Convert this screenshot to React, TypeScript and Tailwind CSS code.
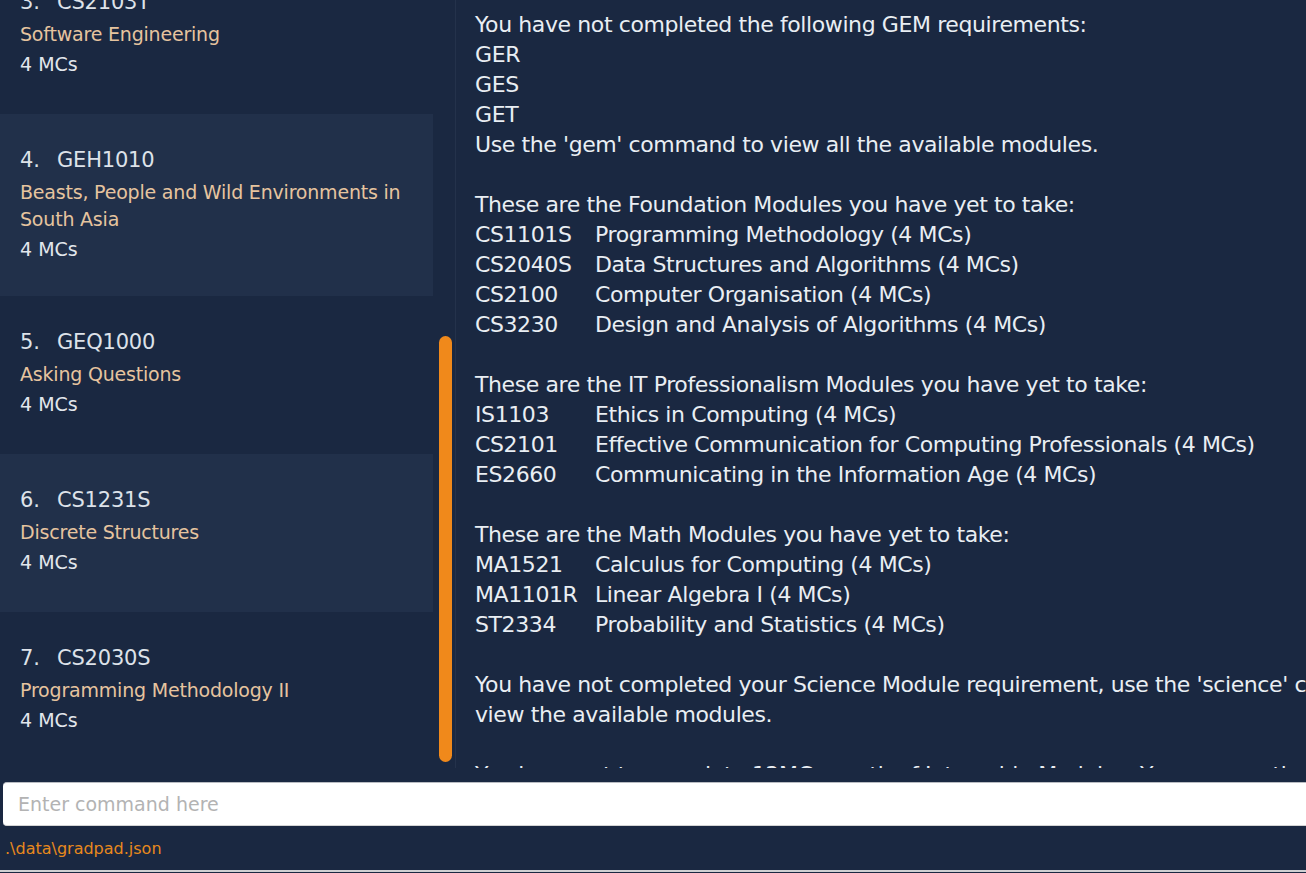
import React from 'react';

type Mod = { idx: number; code: string; title: string[]; mcs: number };

const modules: Mod[] = [
  { idx: 3, code: 'CS2103T', title: ['Software Engineering'], mcs: 4 },
  { idx: 4, code: 'GEH1010', title: ['Beasts, People and Wild Environments in', 'South Asia'], mcs: 4 },
  { idx: 5, code: 'GEQ1000', title: ['Asking Questions'], mcs: 4 },
  { idx: 6, code: 'CS1231S', title: ['Discrete Structures'], mcs: 4 },
  { idx: 7, code: 'CS2030S', title: ['Programming Methodology II'], mcs: 4 },
];

// each line of the result box: plain text, blank, or a module row
type Line = { text?: string; code?: string; name?: string };

const output: Line[] = [
  { text: 'You have not completed the following GEM requirements:' },
  { text: 'GER' },
  { text: 'GES' },
  { text: 'GET' },
  { text: "Use the 'gem' command to view all the available modules." },
  {},
  { text: 'These are the Foundation Modules you have yet to take:' },
  { code: 'CS1101S', name: 'Programming Methodology (4 MCs)' },
  { code: 'CS2040S', name: 'Data Structures and Algorithms (4 MCs)' },
  { code: 'CS2100', name: 'Computer Organisation (4 MCs)' },
  { code: 'CS3230', name: 'Design and Analysis of Algorithms (4 MCs)' },
  {},
  { text: 'These are the IT Professionalism Modules you have yet to take:' },
  { code: 'IS1103', name: 'Ethics in Computing (4 MCs)' },
  { code: 'CS2101', name: 'Effective Communication for Computing Professionals (4 MCs)' },
  { code: 'ES2660', name: 'Communicating in the Information Age (4 MCs)' },
  {},
  { text: 'These are the Math Modules you have yet to take:' },
  { code: 'MA1521', name: 'Calculus for Computing (4 MCs)' },
  { code: 'MA1101R', name: 'Linear Algebra I (4 MCs)' },
  { code: 'ST2334', name: 'Probability and Statistics (4 MCs)' },
  {},
  { text: "You have not completed your Science Module requirement, use the 'science' command to" },
  { text: 'view the available modules.' },
  {},
  { text: 'You have yet to complete 12MCs worth of Internship Modules. You can use the' },
];

const ModuleCard = ({ mod }: { mod: Mod }) => {
  const bg = mod.idx % 2 === 0 ? 'bg-[#21304a]' : 'bg-[#1a2841]';
  const pb = mod.title.length > 1 ? 'pb-[33px]' : 'pb-[36px]';
  return (
    <div className={`${bg} ${pb} pl-5 pt-[31px]`}>
      <div className="flex text-[21px] leading-[30px] tracking-[-0.2px] text-[#dde2e9] whitespace-nowrap">
        <span className="w-[37px] shrink-0">{mod.idx}.</span>
        <span>{mod.code}</span>
      </div>
      <div className="mt-[4px] text-[19px] leading-[27px] tracking-[-0.2px] text-[#e6c49f]">
        {mod.title.map((t) => (
          <div key={t} className="whitespace-nowrap">{t}</div>
        ))}
      </div>
      <div className="mt-[3px] text-[19px] leading-[27px] text-[#e2e6ec]">{mod.mcs} MCs</div>
    </div>
  );
};

export default function App() {
  return (
    <div
      className="w-[1306px] h-[873px] bg-[#1a2841] flex flex-col overflow-hidden"
      style={{ fontFamily: '"DejaVu Sans", sans-serif' }}
    >
      <div className="h-[770px] flex shrink-0">
        {/* module list */}
        <div className="w-[433px] shrink-0 overflow-hidden">
          <div className="-mt-[44px] flex flex-col">
            {modules.map((m) => (
              <ModuleCard key={m.idx} mod={m} />
            ))}
          </div>
        </div>
        {/* scroll bar */}
        <div className="w-[22px] shrink-0 pl-[6px] pt-[336px]">
          <div className="w-[13px] h-[426px] rounded-full bg-[#f0891b]" />
        </div>
        <div className="w-px h-[768px] bg-[#24324b] shrink-0" />
        {/* result display */}
        <div className="flex-1 h-[768px] overflow-hidden pl-[19px] pt-[10px] text-[22px] leading-[30px] tracking-[-0.4px] text-[#e9eef3]">
          {output.map((l, i) =>
            l.code ? (
              <div key={i} className="flex whitespace-nowrap">
                <div className="w-[120px] shrink-0">{l.code}</div>
                <div>{l.name}</div>
              </div>
            ) : (
              <div key={i} className="whitespace-nowrap h-[30px]">{l.text ?? ''}</div>
            )
          )}
        </div>
      </div>
      {/* command box */}
      <div className="mt-[12px] ml-[3px] -mr-[12px] h-[44px] shrink-0 bg-white rounded-[4px] border-t border-[#b9bcc2] border-b border-b-[#d4d4d4] flex items-center pl-[15px]">
        <span className="text-[19px] text-[#b3b3b3]">Enter command here</span>
      </div>
      {/* status bar */}
      <div className="h-[44px] shrink-0 flex items-center pl-[5px] pt-[2px] text-[16px] text-[#e8891d]">
        .\data\gradpad.json
      </div>
      <div className="h-[2px] shrink-0 bg-[#cfd0d2]" />
    </div>
  );
}
